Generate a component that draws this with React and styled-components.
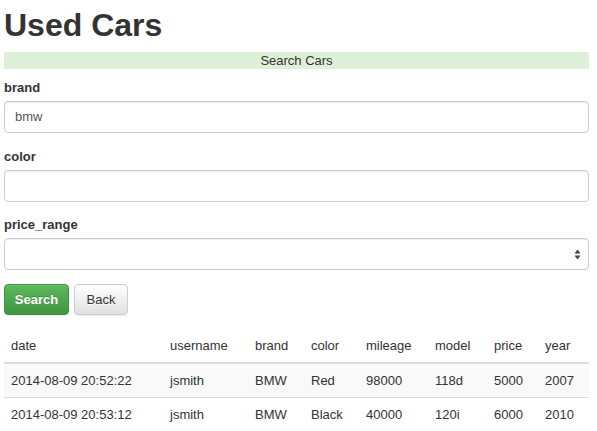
import React from "react";
import styled, { createGlobalStyle } from "styled-components";

const GlobalStyle = createGlobalStyle`
  body {
    margin: 0;
    background: #fff;
    font-family: "Liberation Sans", Arial, sans-serif;
    color: #333;
  }
`;

const Page = styled.div`
  width: 585px;
  padding-left: 4px;
`;

const Title = styled.h1`
  margin: 3px 0 5px 0;
  font-size: 32px;
  line-height: 44px;
  font-weight: bold;
  color: #333;
`;

const Banner = styled.div`
  height: 17px;
  line-height: 17px;
  background: #dff0d8;
  text-align: center;
  font-size: 13px;
  color: #333;
  margin-bottom: 10px;
`;

const Group = styled.div`
  display: flex;
  flex-direction: column;
  margin-bottom: ${(p) => p.$gap}px;
`;

const Label = styled.label`
  font-size: 13px;
  font-weight: bold;
  line-height: 18px;
  margin-bottom: 4px;
`;

const Field = styled.div`
  position: relative;
  height: 32px;
  box-sizing: border-box;
  border: 1px solid #ccc;
  border-radius: 4px;
  box-shadow: inset 0 1px 1px rgba(0, 0, 0, 0.075);
  padding: 0 10px;
  font-size: 13px;
  line-height: 30px;
  color: #555;
`;

const Arrows = styled.svg`
  position: absolute;
  right: 7px;
  top: 10px;
`;

const Buttons = styled.div`
  display: flex;
  gap: 5px;
  margin-bottom: 14px;
`;

const Button = styled.button`
  width: ${(p) => p.$w}px;
  height: 31px;
  padding: 0;
  border-radius: 4px;
  font-family: "Liberation Sans", Arial, sans-serif;
  font-size: 13px;
  font-weight: ${(p) => (p.$primary ? "bold" : "normal")};
  color: ${(p) => (p.$primary ? "#fff" : "#333")};
  border: 1px solid ${(p) => (p.$primary ? "#3e8f3e" : "#ccc")};
  background: ${(p) =>
    p.$primary
      ? "linear-gradient(#5cb85c, #419641)"
      : "linear-gradient(#fff, #e0e0e0)"};
  text-shadow: ${(p) => (p.$primary ? "0 -1px 0 rgba(0,0,0,0.2)" : "0 1px 0 #fff")};
  box-shadow: inset 0 1px 0 rgba(255, 255, 255, 0.15), 0 1px 1px rgba(0, 0, 0, 0.075);
`;

const Table = styled.table`
  width: 585px;
  border-collapse: collapse;
  table-layout: fixed;
  font-size: 13px;
  color: #333;
`;

const Th = styled.th`
  width: ${(p) => p.$w - 14}px;
  text-align: left;
  font-weight: normal;
  padding: 8px 7px;
  line-height: 17px;
  border-bottom: 2px solid #ddd;
`;

const Row = styled.tr`
  background: ${(p) => (p.$striped ? "#f9f9f9" : "#fff")};
`;

const Td = styled.td`
  padding: 8px 7px;
  line-height: 17px;
  border-bottom: 1px solid #ddd;
  white-space: nowrap;
`;

const columns = [
  ["date", 159],
  ["username", 85],
  ["brand", 56],
  ["color", 55],
  ["mileage", 69],
  ["model", 59],
  ["price", 51],
  ["year", 51],
];

const cars = [
  ["2014-08-09 20:52:22", "jsmith", "BMW", "Red", "98000", "118d", "5000", "2007"],
  ["2014-08-09 20:53:12", "jsmith", "BMW", "Black", "40000", "120i", "6000", "2010"],
];

export default function App() {
  return (
    <Page>
      <GlobalStyle />
      <Title>Used Cars</Title>
      <Banner>Search Cars</Banner>
      <Group $gap={15}>
        <Label>brand</Label>
        <Field>bmw</Field>
      </Group>
      <Group $gap={14}>
        <Label>color</Label>
        <Field />
      </Group>
      <Group $gap={14}>
        <Label>price_range</Label>
        <Field>
          <Arrows width="7" height="11" viewBox="0 0 7 11">
            <path d="M0.5 4.5 L3.5 0.5 L6.5 4.5 Z" fill="#444" />
            <path d="M0.5 6.5 L3.5 10.5 L6.5 6.5 Z" fill="#444" />
          </Arrows>
        </Field>
      </Group>
      <Buttons>
        <Button $primary $w={65}>Search</Button>
        <Button $w={54}>Back</Button>
      </Buttons>
      <Table>
        <thead>
          <tr>
            {columns.map(([name, w]) => (
              <Th key={name} $w={w}>{name}</Th>
            ))}
          </tr>
        </thead>
        <tbody>
          {cars.map((car, i) => (
            <Row key={i} $striped={i % 2 === 0}>
              {car.map((v, j) => (
                <Td key={j}>{v}</Td>
              ))}
            </Row>
          ))}
        </tbody>
      </Table>
    </Page>
  );
}
